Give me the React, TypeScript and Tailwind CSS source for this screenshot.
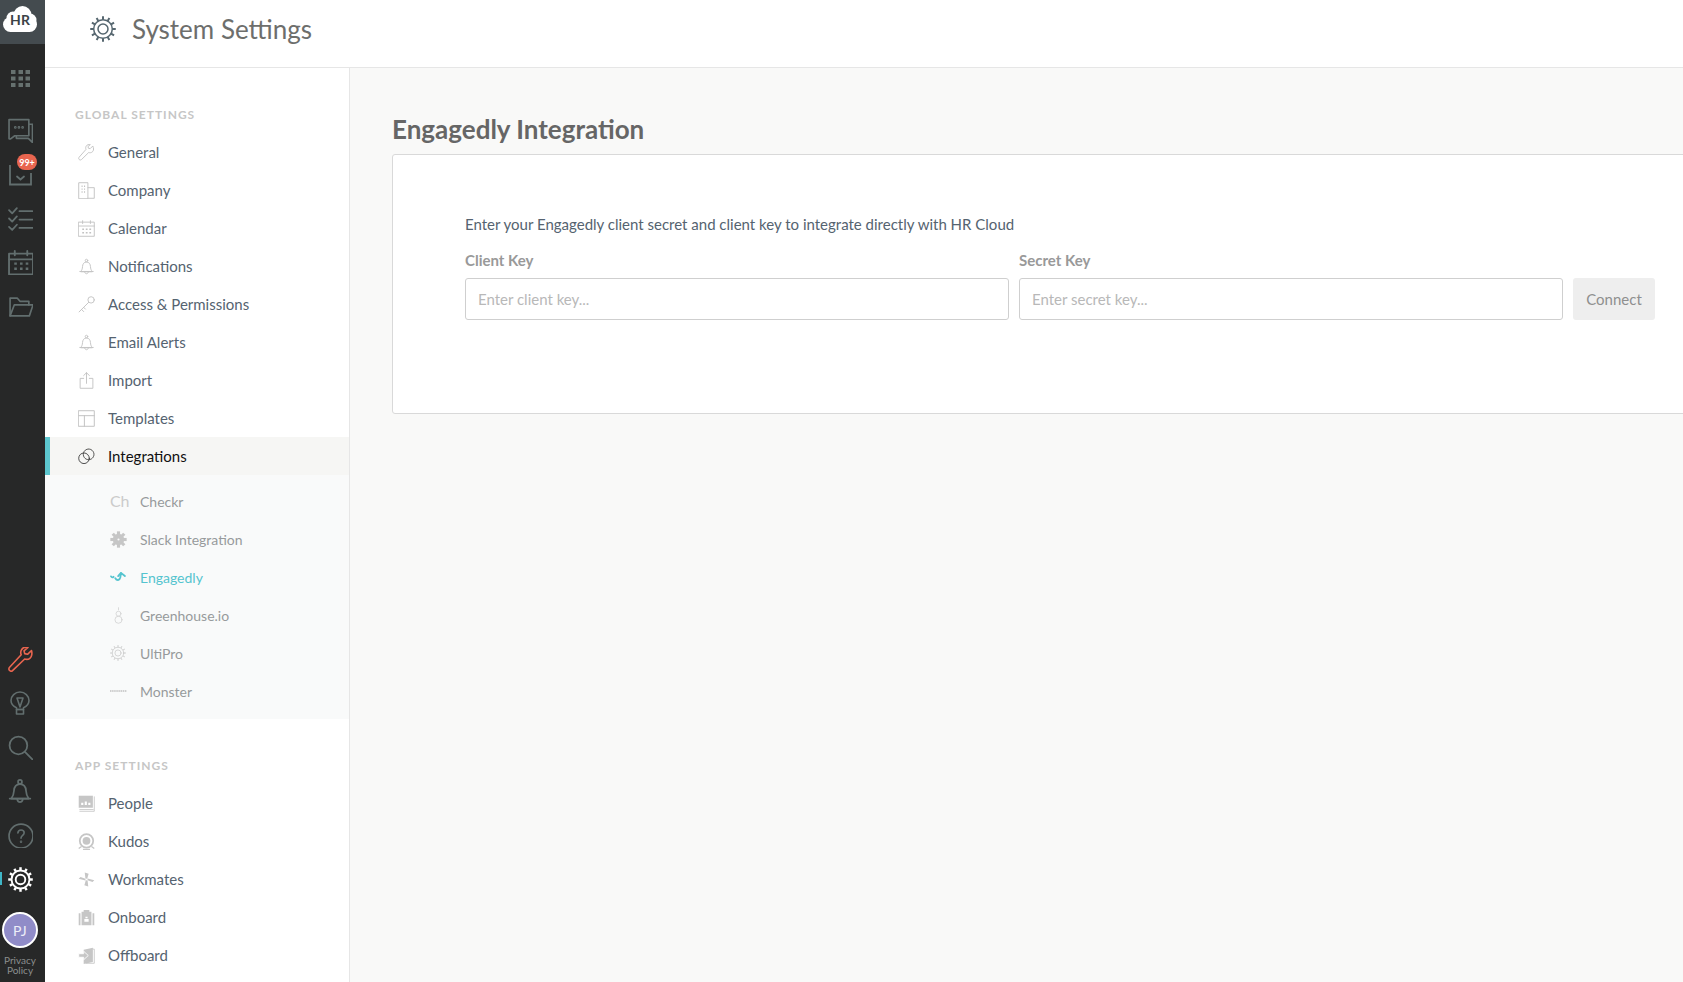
import React from "react";

type P = { children: React.ReactNode; s?: number; c?: string; w?: number; vb?: string };
const I = ({ children, s = 24, c = "#626e6e", w = 1.7, vb = "0 0 24 24" }: P) => (
  <svg width={s} height={s} viewBox={vb} fill="none" stroke={c} strokeWidth={w} strokeLinecap="round" strokeLinejoin="round" className="block shrink-0">
    {children}
  </svg>
);

const gearTeeth = (cx: number, cy: number, r1: number, r2: number, n: number, w?: number) => {
  const out: React.ReactNode[] = [];
  for (let i = 0; i < n; i++) {
    const a = (i * 2 * Math.PI) / n;
    out.push(
      <line key={i} x1={cx + r1 * Math.cos(a)} y1={cy + r1 * Math.sin(a)} x2={cx + r2 * Math.cos(a)} y2={cy + r2 * Math.sin(a)} strokeWidth={w} strokeLinecap="butt" />
    );
  }
  return out;
};
const Gear = ({ s, c, w = 1.6 }: { s: number; c: string; w?: number }) => (
  <I s={s} c={c} w={w}>
    <circle cx="12" cy="12" r="8.6" />
    <circle cx="12" cy="12" r="4.6" />
    {gearTeeth(12, 12, 8.6, 11.8, 12, w * 1.3)}
  </I>
);

const wrench = "M20.5 3.2l-3.4 3.4-2.4-.6-.6-2.4L17.4.9c-2.2-.6-4.5.1-5.7 1.9-1 1.5-1.1 3.3-.4 4.8L1.7 18.5c-1 1.1-.9 2.5 0 3.4.9.9 2.4.9 3.4-.1l10-9.8c1.6.6 3.4.4 4.8-.6 1.9-1.3 2.5-3.6 1.9-5.7z";
const bellP = (
  <>
    <path d="M4 19c1.5-2 2.2-3.5 2.4-7 .2-3.5 2-6.3 5.6-6.3s5.4 2.8 5.6 6.3c.2 3.5.9 5 2.4 7z" />
    <path d="M2.5 19h19" />
    <path d="M9.5 20c.4 1.5 1.3 2.2 2.500 2.200s2.100-.7 2.500-2.200" />
    <circle cx="12" cy="3.600" r="1.800" />
  </>
);

const rail = {
  grid: (
    <svg width="19" height="17" viewBox="0 0 19 17" className="block">
      {[0, 7.5, 14.5].flatMap((x) => [0, 6.5, 13].map((y) => <rect key={`${x}-${y}`} x={x} y={y} width="4.5" height="4" fill="#66716f" />))}
    </svg>
  ),
  chat: (
    <I s={25} w={1.6}>
      <path d="M1 1.500h19v15.500H6.500L2.500 20 1 20z" />
      <path d="M20 6h3.500v17.500L19.500 19.500H8v-2.500" />
      <circle cx="7" cy="9" r=".5" />
      <circle cx="10.500" cy="9" r=".5" />
      <circle cx="14" cy="9" r=".5" />
    </I>
  ),
  tasks: (
    <I s={25} w={1.7}>
      <path d="M1 4l3 3 4.500-5M1 12l3 3 4.500-5M1 20l3 3 4.500-5" />
      <path d="M11 5h12.500M11 13h12.500M11 21h12.500" />
    </I>
  ),
  cal: (
    <I s={25} w={1.8}>
      <rect x="1" y="3.500" width="23" height="20" />
      <path d="M1 9h23M6.500 1v4M18.500 1v4" />
      <path d="M6 13h2.500M11.500 13h2.500M17 13h2.500M6 18h2.500M11.500 18h2.500M17 18h2.500" strokeWidth="2.200" strokeLinecap="butt" />
    </I>
  ),
  folder: (
    <I s={25} w={1.6}>
      <path d="M2 21V4h7l2.500 3H20v3.500" />
      <path d="M2 21l4-10.500h18L20.500 21z" />
    </I>
  ),
  bulb: (
    <I s={24} w={1.6}>
      <path d="M8.500 18.500v-1.800C5.500 15.300 3 13 3 9.500 3 5 7 1 12 1s9 4 9 8.500c0 3.500-2.500 5.800-5.500 7.200v1.800z" />
      <path d="M8.500 18.500h7v4.500h-7z" />
      <path d="M9 7l3 9 3-9z" />
    </I>
  ),
  search: (
    <I s={25} w={1.7}>
      <circle cx="10" cy="10" r="8.500" />
      <path d="M16.500 16.500l7.500 7.500" />
    </I>
  ),
  bell: <I s={26} w={1.6}>{bellP}</I>,
  help: (
    <I s={25} w={1.6}>
      <circle cx="12.500" cy="12.500" r="11.500" />
      <path d="M9.500 9.500c.2-1.800 1.400-2.800 3-2.800s3 1 3 2.700c0 2.500-3 2.500-3 5.100" />
      <circle cx="12.500" cy="18" r=".4" />
    </I>
  ),
};

const RailCell = ({ children, h = "h-[44px]" }: { children: React.ReactNode; h?: string }) => (
  <div className={`relative flex ${h} w-full items-center justify-center pr-[5px]`}>{children}</div>
);

const Rail = () => (
  <aside className="flex h-full w-[45px] shrink-0 flex-col justify-between bg-[#272828]">
    <div className="flex flex-col">
      <div className="flex h-[44px] items-center justify-center bg-[#444b4f] pb-[6px] pr-[5px]">
        <div className="relative flex h-[26px] w-[34px] items-center justify-center">
          <svg width="34" height="26" viewBox="0 0 34 26" fill="#ffffff" className="absolute inset-0 block">
            <rect x="0" y="11" width="34" height="15" rx="7.500" />
            <circle cx="10" cy="12" r="6.500" />
            <circle cx="19.500" cy="9" r="9" />
            <circle cx="27" cy="14" r="6.500" />
          </svg>
          <span className="relative mt-[2px] text-[14px] font-bold leading-none text-[#3c4347]">HR</span>
        </div>
      </div>
      <div className="mt-[12px]">
        <RailCell>{rail.grid}</RailCell>
      </div>
      <div className="mt-[8px]">
        <RailCell>{rail.chat}</RailCell>
      </div>
      <RailCell>
        <svg width="23" height="24" viewBox="0 0 23 24" fill="none" stroke="#626e6e" strokeWidth="1.800" className="block">
          <path d="M1 3v19.500h21V11" />
          <path d="M8 14.500l3.500 3 3.500-3" strokeLinecap="round" />
        </svg>
        <span className="absolute left-[17px] top-[2px] flex h-[16px] w-[20px] items-center justify-center rounded-full bg-[#e8654f] text-[9px] font-bold leading-none text-white">
          99+
        </span>
      </RailCell>
      <RailCell>{rail.tasks}</RailCell>
      <RailCell>{rail.cal}</RailCell>
      <RailCell>{rail.folder}</RailCell>
    </div>
    <div className="flex flex-col items-center pb-[7px]">
      <RailCell>
        <svg width="25" height="25" viewBox="0 0 25 25" fill="none" stroke="#e8654f" strokeWidth="1.600" strokeLinejoin="round" className="block">
          <path d="M23.500 3.500l-4 3.800-2.800-.7-.7-2.800L20 .5c-2.500-.7-5 0-6.300 2-1.100 1.700-1.200 3.600-.5 5.200L1.600 20.300c-1 1.100-.9 2.400 0 3.200.9.900 2.200.9 3.200-.1L16.700 12c1.800.6 3.700.4 5.200-.7 2-1.500 2.400-5.300 1.600-7.800z" />
        </svg>
      </RailCell>
      <RailCell>{rail.bulb}</RailCell>
      <RailCell>{rail.search}</RailCell>
      <RailCell>{rail.bell}</RailCell>
      <RailCell>{rail.help}</RailCell>
      <RailCell h="h-[45px]">
        <span className="absolute left-0 top-[15px] h-[13px] w-[2px] bg-[#3fb6c6]" />
        <Gear s={25} c="#ffffff" w={1.8} />
      </RailCell>
      <div className="mr-[5px] mt-[10px] flex h-[36px] w-[36px] items-center justify-center rounded-full border-2 border-white bg-[#908cc8] text-[14px] tracking-[0.5px] text-[#eeeef8]">
        PJ
      </div>
      <div className="mr-[5px] mt-[7px] text-center text-[10px] leading-[10px] text-[#8b8f8f]">
        Privacy
        <br />
        Policy
      </div>
    </div>
  </aside>
);

const g = "#c2c2c2";
const sw = 1.3;
const sideIcons: Record<string, React.ReactNode> = {
  General: (
    <I s={17} c={g} w={sw}>
      <path d={wrench} />
    </I>
  ),
  Company: (
    <I s={17} c={g} w={sw}>
      <path d="M1 23V1h13v22zM14 8h9v15h-9" />
      <path d="M5 6h1.500M8.500 6H10M5 10h1.500M8.500 10H10M5 14h1.500M8.500 14H10" strokeWidth="2" strokeLinecap="butt" />
    </I>
  ),
  Calendar: (
    <I s={17} c={g} w={sw}>
      <rect x="1" y="3" width="22" height="20" />
      <path d="M1 8.500h22M6.500 1v4M17.500 1v4" />
      <path d="M6 13h2.500M11 13h2.500M16 13h2.500M6 18h2.500M11 18h2.500M16 18h2.500" strokeWidth="2" strokeLinecap="butt" />
    </I>
  ),
  Notifications: <I s={17} c={g} w={sw}>{bellP}</I>,
  "Access & Permissions": (
    <I s={17} c={g} w={sw}>
      <circle cx="18.500" cy="5.500" r="4.500" />
      <path d="M15 9L1.500 22.500M5 19l3 3M8 16l2.500 2.500" />
    </I>
  ),
  "Email Alerts": <I s={17} c={g} w={sw}>{bellP}</I>,
  Import: (
    <I s={17} c={g} w={sw}>
      <path d="M8 9H3v14h18V9h-5" />
      <path d="M12 16V1M8 5l4-4 4 4" />
    </I>
  ),
  Templates: (
    <I s={17} c={g} w={1.4}>
      <rect x="1" y="1" width="22" height="22" />
      <path d="M1 8h22M9 8v15" />
    </I>
  ),
  Integrations: (
    <I s={17} c="#333333" w={1.2}>
      <circle cx="8.500" cy="14.500" r="7.500" />
      <circle cx="15" cy="9" r="7.500" strokeDasharray="1.500 1" />
    </I>
  ),
  People: (
    <svg width="17" height="17" viewBox="0 0 24 24" className="block shrink-0">
      <path d="M1 1h20v17H1z" fill="#c6c6c6" />
      <path d="M2 20.500h20M2 23h21V2" stroke="#c6c6c6" strokeWidth="1.200" fill="none" />
      <path d="M4.500 14v-3h3v3zM9.500 14v-5h3v5zM14.500 14v-3h3v3z" fill="#ffffff" />
    </svg>
  ),
  Kudos: (
    <svg width="17" height="17" viewBox="0 0 24 24" className="block shrink-0">
      <circle cx="12" cy="11" r="9.500" fill="none" stroke="#c6c6c6" strokeWidth="2.500" />
      <circle cx="12" cy="11" r="5.500" fill="#c6c6c6" />
      <path d="M1 22l4-3M23 22l-4-3M7 23h10" stroke="#c6c6c6" strokeWidth="1.800" />
    </svg>
  ),
  Workmates: (
    <svg width="17" height="17" viewBox="0 0 24 24" className="block shrink-0">
      <path d="M10.500 10.500L9.500 2l5.500 2-2 7zM13.500 10.500L23 13l-2.500 2.500-7-2.500zM13.500 13.500L14.500 22 9 20l2-7zM10.500 13.500L1 11l2.500-2.500 7 2.500z" fill="#c6c6c6" />
    </svg>
  ),
  Onboard: (
    <svg width="17" height="17" viewBox="0 0 24 24" className="block shrink-0">
      <path d="M5 4h14v19H5zM1 6h2.500v17H1zM20.500 6H23v17h-2.500zM8 4V1.500h8V4" fill="#c6c6c6" />
      <path d="M9 18v-4h6v4zM10.500 11h3v2h-3z" fill="#ffffff" />
    </svg>
  ),
  Offboard: (
    <svg width="17" height="17" viewBox="0 0 24 24" className="block shrink-0">
      <path d="M8 4l13-3v20l-13 3z" fill="#c6c6c6" />
      <path d="M21 3h2v20H11" stroke="#c6c6c6" strokeWidth="1.200" fill="none" />
      <path d="M1 9.500h7V6l6.500 6L8 18v-3.500H1z" fill="#c6c6c6" stroke="#ffffff" strokeWidth="1.200" />
    </svg>
  ),
};

const subIcons: Record<string, React.ReactNode> = {
  Checkr: <span className="w-[17px] text-[16px] leading-none tracking-[-0.3px] text-[#cbcbcb]">Ch</span>,
  "Slack Integration": (
    <I s={17} c="#c6c6c6" w={2}>
      <circle cx="12" cy="12" r="7" fill="#c6c6c6" />
      {gearTeeth(12, 12, 6, 11.5, 8, 4.4)}
      <circle cx="12" cy="12" r="1.500" fill="#f9fafa" stroke="none" />
    </I>
  ),
  Engagedly: (
    <I s={17} c="#55c4cf" w={2.6}>
      <path d="M1.500 10.500c1 2 2.500 1.500 3.500.5M7.500 13c2 3.500 6 3.500 7-1L15.500 6" />
      <path d="M11.500 10l4-4.500 5.500 4.500" />
    </I>
  ),
  "Greenhouse.io": (
    <I s={17} c="#d0d0d0" w={1.1}>
      <circle cx="12" cy="18" r="5" />
      <circle cx="12" cy="9.500" r="3.500" />
      <path d="M12 1v3" />
    </I>
  ),
  UltiPro: <Gear s={16} c="#c9c9c9" w={1.1} />,
  Monster: (
    <svg width="17" height="4" viewBox="0 0 17 4" className="block shrink-0">
      <path d="M0 2h17" stroke="#cfcfcf" strokeWidth="1.800" strokeDasharray="1.500 .6" />
    </svg>
  ),
};

const NavRow = ({ label }: { label: string }) => (
  <div className="flex h-[38px] items-center pl-[33px]">
    <span className="flex w-[30px] shrink-0 items-center">{sideIcons[label]}</span>
    <span className="text-[15px] text-[#556370]">{label}</span>
  </div>
);

const Heading = ({ children, cls }: { children: React.ReactNode; cls: string }) => (
  <div className={`pl-[30px] text-[12px] font-bold leading-[16px] tracking-[1px] text-[#c6c6c6] ${cls}`}>{children}</div>
);

const Sidebar = () => (
  <nav className="h-full w-[305px] shrink-0 overflow-hidden border-r border-[#e6e6e6] bg-white">
    <Heading cls="mt-[39px] mb-[10px]">GLOBAL SETTINGS</Heading>
    {["General", "Company", "Calendar", "Notifications", "Access & Permissions", "Email Alerts", "Import", "Templates"].map((l) => (
      <NavRow key={l} label={l} />
    ))}
    <div className="flex h-[38px] items-center border-l-[5px] border-[#5cc6ce] bg-[#f6f6f4] pl-[28px]">
      <span className="flex w-[30px] shrink-0 items-center">{sideIcons.Integrations}</span>
      <span className="text-[15px] text-[#111111]">Integrations</span>
    </div>
    <div className="bg-[#f9fafa] pt-[7px] pb-[9px]">
      {["Checkr", "Slack Integration", "Engagedly", "Greenhouse.io", "UltiPro", "Monster"].map((l) => (
        <div key={l} className="flex h-[38px] items-center pl-[65px]">
          <span className="flex w-[30px] shrink-0 items-center">{subIcons[l]}</span>
          <span className={`text-[14px] ${l === "Engagedly" ? "text-[#55c4cf]" : "text-[#979a9c]"}`}>{l}</span>
        </div>
      ))}
    </div>
    <Heading cls="mt-[39px] mb-[10px]">APP SETTINGS</Heading>
    {["People", "Kudos", "Workmates", "Onboard", "Offboard"].map((l) => (
      <NavRow key={l} label={l} />
    ))}
  </nav>
);

const Field = ({ label, ph }: { label: string; ph: string }) => (
  <div className="flex w-[544px] shrink-0 flex-col">
    <label className="mb-[8px] text-[15px] font-bold leading-[20px] text-[#999999]">{label}</label>
    <input
      readOnly
      placeholder={ph}
      className="h-[42px] w-full rounded-[3px] border border-[#cfcfcf] bg-white px-[12px] text-[15px] outline-none placeholder:text-[#b8b8b8]"
    />
  </div>
);

export default function App() {
  return (
    <div className="flex h-screen w-full overflow-hidden bg-white [font-family:Lato,'Noto_Sans',sans-serif]">
      <Rail />
      <div className="flex min-w-0 flex-1 flex-col">
        <header className="flex h-[68px] shrink-0 items-center border-b border-[#e6e6e6] bg-white pb-[9px] pl-[45px]">
          <Gear s={26} c="#55666f" w={1.4} />
          <h1 className="ml-[16px] text-[26px] leading-none text-[#6d6e6c]">System Settings</h1>
        </header>
        <div className="flex min-h-0 flex-1">
          <Sidebar />
          <main className="min-w-0 flex-1 overflow-hidden bg-[#f9f9f8] pl-[42px] pt-[44px]">
            <h2 className="mb-[8px] text-[26px] font-bold leading-[34px] text-[#666666]">Engagedly Integration</h2>
            <section className="h-[260px] w-[1400px] rounded-[3px] border border-[#d9d9d9] bg-white pl-[72px] pt-[59px]">
              <p className="mb-[16px] text-[15px] leading-[20px] text-[#556370]">
                Enter your Engagedly client secret and client key to integrate directly with HR Cloud
              </p>
              <div className="flex items-end">
                <Field label="Client Key" ph="Enter client key..." />
                <div className="ml-[10px]">
                  <Field label="Secret Key" ph="Enter secret key..." />
                </div>
                <button className="ml-[10px] h-[42px] w-[82px] rounded-[3px] bg-[#eeeeee] text-[15px] text-[#8f8f8f]">Connect</button>
              </div>
            </section>
          </main>
        </div>
      </div>
    </div>
  );
}
